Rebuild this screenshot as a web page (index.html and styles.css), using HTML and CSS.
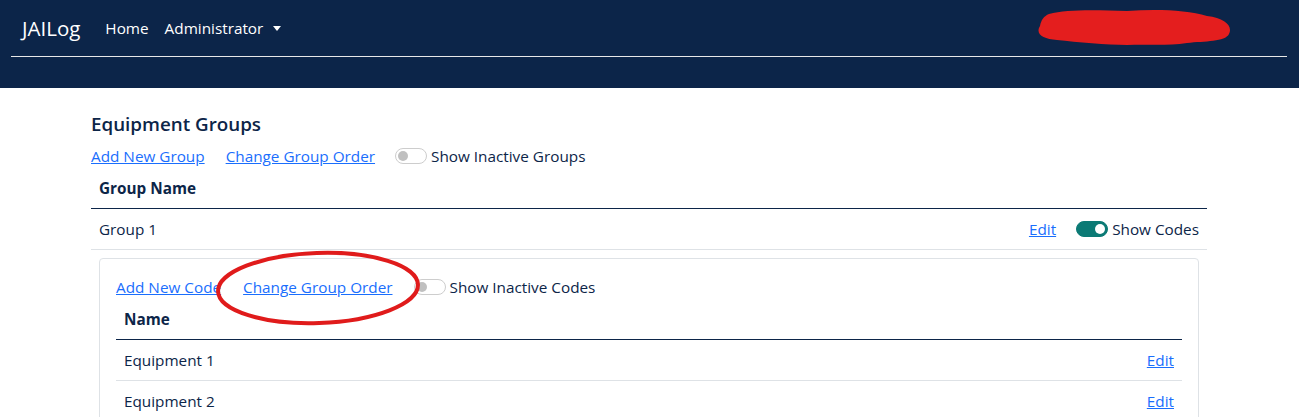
FILE: index.html
```html
<!DOCTYPE html>
<html lang="en">
<head>
    <meta charset="UTF-8">
    <title>JAILog - Equipment Groups</title>
    <link rel="stylesheet" href="styles.css">
</head>
<body>
    <nav class="navbar">
        <div class="nav-top">
            <a class="brand" href="#">JAILog</a>
            <a class="nav-link" href="#">Home</a>
            <a class="nav-link dropdown" href="#">Administrator <span class="caret"></span></a>
        </div>
        <div class="nav-rule"></div>
        <svg class="scribble" viewBox="0 0 194 38" xmlns="http://www.w3.org/2000/svg">
            <path d="M12 6 C30 1 60 2 90 3 C120 1 150 2 170 8 C188 10 196 18 192 26 C188 34 168 33 150 35 C130 38 110 36 90 37 C70 37 40 34 20 32 C6 31 -2 26 3 18 C4 12 7 8 12 6 Z" fill="#e41e1e"/>
        </svg>
    </nav>

    <main class="container">
        <h4 class="page-title">Equipment Groups</h4>
        <div class="actions">
            <a href="#">Add New Group</a>
            <a href="#">Change Group Order</a>
            <label class="switch"><span class="toggle"></span>Show Inactive Groups</label>
        </div>

        <table class="table">
            <thead>
                <tr><th>Group Name</th><th></th></tr>
            </thead>
            <tbody>
                <tr>
                    <td>Group 1</td>
                    <td class="cell-right">
                        <div class="row-tools">
                            <a href="#">Edit</a>
                            <label class="switch"><span class="toggle on"></span>Show Codes</label>
                        </div>
                    </td>
                </tr>
                <tr class="codes-row">
                    <td colspan="2">
                        <div class="codes-card">
                            <div class="actions">
                                <a href="#">Add New Code</a>
                                <a href="#">Change Group Order</a>
                                <label class="switch"><span class="toggle"></span>Show Inactive Codes</label>
                            </div>
                            <table class="table">
                                <thead>
                                    <tr><th>Name</th><th></th></tr>
                                </thead>
                                <tbody>
                                    <tr><td>Equipment 1</td><td class="cell-right"><a href="#">Edit</a></td></tr>
                                    <tr><td>Equipment 2</td><td class="cell-right"><a href="#">Edit</a></td></tr>
                                </tbody>
                            </table>
                        </div>
                    </td>
                </tr>
            </tbody>
        </table>
    </main>

    <svg class="circle-mark" viewBox="0 0 210 80" xmlns="http://www.w3.org/2000/svg">
        <ellipse cx="105" cy="40" rx="100" ry="35" fill="none" stroke="#e01b1b" stroke-width="4" transform="rotate(-2 105 40)"/>
    </svg>
</body>
</html>
```

FILE: styles.css
```css
* {
    margin: 0;
    padding: 0;
    box-sizing: border-box;
}
body {
    font-family: "Open Sans", "Noto Sans", sans-serif;
    font-size: 15.3px;
    line-height: 24px;
    color: #0c2548;
    background: #fff;
    position: relative;
    overflow: hidden;
}
a {
    color: #1a6efd;
    text-decoration: underline;
}
.navbar {
    background-color: #0c2549;
    height: 88px;
    padding: 0 12px 0 11px;
    position: relative;
}
.nav-top {
    display: flex;
    align-items: center;
    height: 56px;
    padding-left: 11px;
}
.nav-top a {
    color: #fff;
    text-decoration: none;
}
.brand {
    font-size: 20.5px;
    margin-right: 25px;
}
.nav-link {
    margin-right: 16px;
}
.caret {
    display: inline-block;
    width: 0;
    height: 0;
    margin-left: 6px;
    vertical-align: 3px;
    border-top: 5px solid #fff;
    border-left: 4px solid transparent;
    border-right: 4px solid transparent;
}
.nav-rule {
    height: 1px;
    background: #e8e8e8;
}
.scribble {
    position: absolute;
    left: 1037px;
    top: 8px;
    width: 194px;
    height: 38px;
}
.container {
    width: 1116px;
    margin-left: 91px;
    padding-top: 24px;
}
.page-title {
    font-size: 18.8px;
    font-weight: 600;
    line-height: 24px;
    margin-bottom: 8px;
}
.actions {
    display: flex;
    align-items: center;
    gap: 21px;
    height: 24px;
}
.actions .switch {
    margin-left: -1px;
}
.switch {
    display: flex;
    align-items: center;
    gap: 4px;
}
.toggle {
    width: 32px;
    height: 16px;
    border: 1px solid #cdcdcd;
    border-radius: 8px;
    position: relative;
    background: #fff;
}
.toggle::after {
    content: "";
    position: absolute;
    top: 2px;
    left: 2px;
    width: 10px;
    height: 10px;
    border-radius: 50%;
    background: #c0c0c0;
}
.toggle.on {
    background: #0b7a75;
    border-color: #0b7a75;
}
.toggle.on::after {
    left: auto;
    right: 2px;
    background: #fff;
}
.table {
    width: 100%;
    border-collapse: collapse;
}
.table th,
.table td {
    padding: 8px;
    height: 41px;
    text-align: left;
    vertical-align: middle;
    border-bottom: 1px solid #dee2e6;
}
.table th {
    font-weight: 700;
}
.table thead th {
    height: 40px;
    border-bottom: 1px solid #0c2549;
}
.table td.cell-right {
    text-align: right;
}
.row-tools {
    display: flex;
    justify-content: flex-end;
    align-items: center;
    gap: 20px;
}
.table .codes-row > td {
    border-bottom: none;
    height: auto;
}
.codes-card {
    border: 1px solid #dee2e6;
    border-radius: 4px;
    padding: 16px 16px 0;
}
.codes-card .actions {
    gap: 22px;
}
.circle-mark {
    position: absolute;
    left: 213px;
    top: 248px;
    width: 210px;
    height: 80px;
}
```
